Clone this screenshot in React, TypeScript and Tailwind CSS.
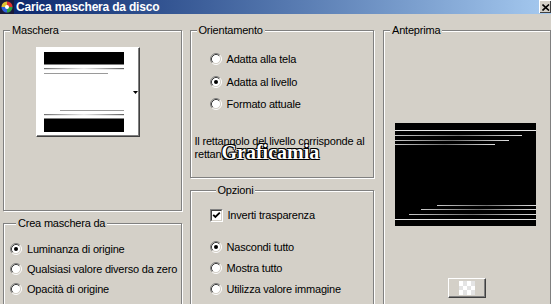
import React from 'react'

// Finestra "Carica maschera da disco" in stile Windows classico

function Radio({ checked = false }: { checked?: boolean }) {
  return (
    <svg width="12" height="12" viewBox="0 0 12 12" className="shrink-0">
      <circle cx="6" cy="6" r="4.5" fill="#fff" />
      <path d="M2.11 9.89 A5.5 5.5 0 0 1 9.89 2.11" fill="none" stroke="#808080" />
      <path d="M9.89 2.11 A5.5 5.5 0 0 1 2.11 9.89" fill="none" stroke="#fff" />
      <path d="M2.82 9.18 A4.5 4.5 0 0 1 9.18 2.82" fill="none" stroke="#404040" />
      <path d="M9.18 2.82 A4.5 4.5 0 0 1 2.82 9.18" fill="none" stroke="#d4d0c8" />
      {checked && <circle cx="6" cy="6" r="2" fill="#000" />}
    </svg>
  )
}

function Checkbox() {
  return (
    <div className="w-[13px] h-[13px] shrink-0 border border-t-[#808080] border-l-[#808080] border-r-white border-b-white">
      <div className="w-full h-full border border-t-[#404040] border-l-[#404040] border-r-[#d4d0c8] border-b-[#d4d0c8] bg-white flex items-center justify-center">
        <svg width="9" height="9" viewBox="0 0 9 9">
          <path d="M1.2 3.8 L3.4 6 L7.8 1.6" fill="none" stroke="#000" strokeWidth="1.8" />
        </svg>
      </div>
    </div>
  )
}

function Option({ label, checked, className = '' }: { label: string; checked?: boolean; className?: string }) {
  return (
    <div className={`flex items-center h-[16px] gap-[5px] ${className}`}>
      <Radio checked={checked} />
      <span>{label}</span>
    </div>
  )
}

function Group({ label, className = '', children }: { label: string; className?: string; children?: React.ReactNode }) {
  return (
    <div className={`border border-[#808080] shadow-[inset_1px_1px_0_#fff,1px_1px_0_#fff] ${className}`}>
      <div className="-mt-[7px] ml-[6px] w-fit bg-[#d4d0c8] px-[2px] leading-[13px]">{label}</div>
      {children}
    </div>
  )
}

function MaskThumb() {
  return (
    <svg width="80" height="80" viewBox="0 0 80 80">
      <defs>
        <linearGradient id="mg" x1="0" x2="1">
          <stop offset="0" stopColor="#707070" />
          <stop offset="0.5" stopColor="#e8e8e8" />
          <stop offset="1" stopColor="#606060" />
        </linearGradient>
      </defs>
      <rect x="0" y="0" width="80" height="12.5" fill="#000" />
      <rect x="0" y="16" width="80" height="1.2" fill="url(#mg)" />
      <rect x="0" y="21" width="64" height="1" fill="#9a9a9a" />
      <rect x="16" y="58" width="64" height="1" fill="#9a9a9a" />
      <rect x="0" y="62" width="80" height="1.2" fill="url(#mg)" />
      <rect x="0" y="66.5" width="80" height="13.5" fill="#000" />
    </svg>
  )
}

function Preview() {
  return (
    <svg width="141" height="103" viewBox="0 0 141 103" className="block">
      <defs>
        <linearGradient id="pg" x1="0" x2="1">
          <stop offset="0" stopColor="#c8c8c8" />
          <stop offset="0.5" stopColor="#707070" />
          <stop offset="1" stopColor="#e0e0e0" />
        </linearGradient>
      </defs>
      <rect width="141" height="103" fill="#000" />
      <rect x="0" y="7" width="141" height="1" fill="#e6e6e6" />
      <rect x="0" y="12" width="127" height="1" fill="url(#pg)" />
      <rect x="0" y="17" width="114" height="1" fill="url(#pg)" />
      <rect x="0" y="21" width="100" height="1" fill="url(#pg)" />
      <rect x="42" y="82" width="99" height="1" fill="url(#pg)" />
      <rect x="26" y="86" width="115" height="1" fill="url(#pg)" />
      <rect x="14" y="91" width="127" height="1" fill="url(#pg)" />
      <rect x="0" y="96" width="141" height="1" fill="#e6e6e6" />
    </svg>
  )
}

function AppIcon() {
  return (
    <svg width="14" height="14" viewBox="0 0 14 14" className="shrink-0">
      <rect width="14" height="14" fill="#1a1a3a" />
      <circle cx="7" cy="7" r="5.5" fill="#3a3a5a" />
      <path d="M7 7 L7 1.5 A5.5 5.5 0 0 1 12.5 7 Z" fill="#e03030" />
      <path d="M7 7 L12.5 7 A5.5 5.5 0 0 1 7 12.5 Z" fill="#30a040" />
      <path d="M7 7 L7 12.5 A5.5 5.5 0 0 1 1.5 7 Z" fill="#3060e0" />
      <path d="M7 7 L1.5 7 A5.5 5.5 0 0 1 7 1.5 Z" fill="#e0c030" />
      <circle cx="7" cy="7" r="2" fill="#fff" />
    </svg>
  )
}

export default function App() {
  return (
    <div className="w-[551px] h-[304px] overflow-hidden bg-[#d4d0c8] font-['Liberation_Sans',Arial,sans-serif] text-[11px] tracking-[-0.2px] text-black">
      {/* barra del titolo */}
      <div className="flex items-center h-[14px] bg-linear-to-r from-[#0a246a] to-[#a6caf0]">
        <AppIcon />
        <span className="ml-[2px] text-white font-bold text-[12px] leading-[14px]">Carica maschera da disco</span>
        <div className="ml-auto w-[12px] h-[13px] self-start bg-[#d4d0c8] border-t border-l border-white shadow-[inset_-1px_-1px_0_#404040] flex items-center justify-center">
          <svg width="8" height="7" viewBox="0 0 8 7">
            <path d="M0.5 0.5 L7 6.5 M7 0.5 L0.5 6.5" stroke="#000" strokeWidth="1.6" />
          </svg>
        </div>
      </div>

      <div className="flex pt-[16px]">
        {/* colonna sinistra */}
        <div className="ml-[3px] w-[179px] flex flex-col">
          <Group label="Maschera" className="h-[181px]">
            <div className="mt-[10px] ml-[32px] w-[104px] h-[90px] border-t border-l border-white border-r border-b border-r-[#404040] border-b-[#404040] shadow-[inset_-1px_-1px_0_#808080] bg-white flex items-center">
              <div className="ml-[7px]">
                <MaskThumb />
              </div>
              <svg width="5" height="3" viewBox="0 0 5 3" className="ml-[9px] mt-[1px]">
                <path d="M0 0 H5 L2.5 3 Z" fill="#000" />
              </svg>
            </div>
          </Group>
          <Group label="Crea maschera da" className="mt-[12px] h-[100px] pl-[6px]">
            <Option label="Luminanza di origine" checked className="mt-[11px]" />
            <Option label="Qualsiasi valore diverso da zero" className="mt-[4px]" />
            <Option label="Opacità di origine" className="mt-[4px]" />
          </Group>
        </div>

        {/* colonna centrale */}
        <div className="ml-[8px] w-[185px] flex flex-col">
          <Group label="Orientamento" className="h-[148px]">
            <div className="pl-[19px]">
              <Option label="Adatta alla tela" className="mt-[14px]" />
              <Option label="Adatta al livello" checked className="mt-[7px]" />
              <Option label="Formato attuale" className="mt-[6px]" />
            </div>
            <div className="relative mt-[23px] pl-[4px] leading-[13px]">
              <div>Il rettangolo del livello corrisponde al</div>
              <div>rettangolo della tela.</div>
              <span className="absolute left-[31px] top-[7px] font-['Liberation_Serif',serif] font-bold text-[20px] leading-[20px] tracking-normal text-white [text-shadow:1px_1px_0_#000,-1px_-1px_0_#000,1px_-1px_0_#000,-1px_1px_0_#000]">
                Graficamia
              </span>
            </div>
          </Group>
          <Group label="Opzioni" className="mt-[12px] h-[120px] pl-[19px]">
            <div className="flex items-center h-[16px] gap-[5px] mt-[10px]">
              <Checkbox />
              <span>Inverti trasparenza</span>
            </div>
            <Option label="Nascondi tutto" checked className="mt-[16px]" />
            <Option label="Mostra tutto" className="mt-[5px]" />
            <Option label="Utilizza valore immagine" className="mt-[5px]" />
          </Group>
        </div>

        {/* colonna destra */}
        <div className="ml-[9px] w-[168px] shrink-0 flex flex-col">
          <Group label="Anteprima" className="h-[300px]">
            <div className="mt-[86px] ml-[11px]">
              <Preview />
            </div>
            <div className="mt-[52px] ml-[64px] w-[38px] h-[20px] bg-[#d4d0c8] border-t border-l border-white border-r border-b border-r-[#404040] border-b-[#404040] shadow-[inset_-1px_-1px_0_#808080] flex items-center justify-center">
              <svg width="16" height="14" viewBox="0 0 16 14">
                <rect width="16" height="14" fill="#e4e4e4" />
                <rect x="0" y="0" width="4" height="5" fill="#fff" />
                <rect x="8" y="0" width="4" height="5" fill="#fff" />
                <rect x="4" y="5" width="4" height="4" fill="#fff" />
                <rect x="12" y="5" width="4" height="4" fill="#fff" />
                <rect x="0" y="9" width="4" height="5" fill="#fff" />
                <rect x="8" y="9" width="4" height="5" fill="#fff" />
              </svg>
            </div>
          </Group>
        </div>
      </div>
    </div>
  )
}
